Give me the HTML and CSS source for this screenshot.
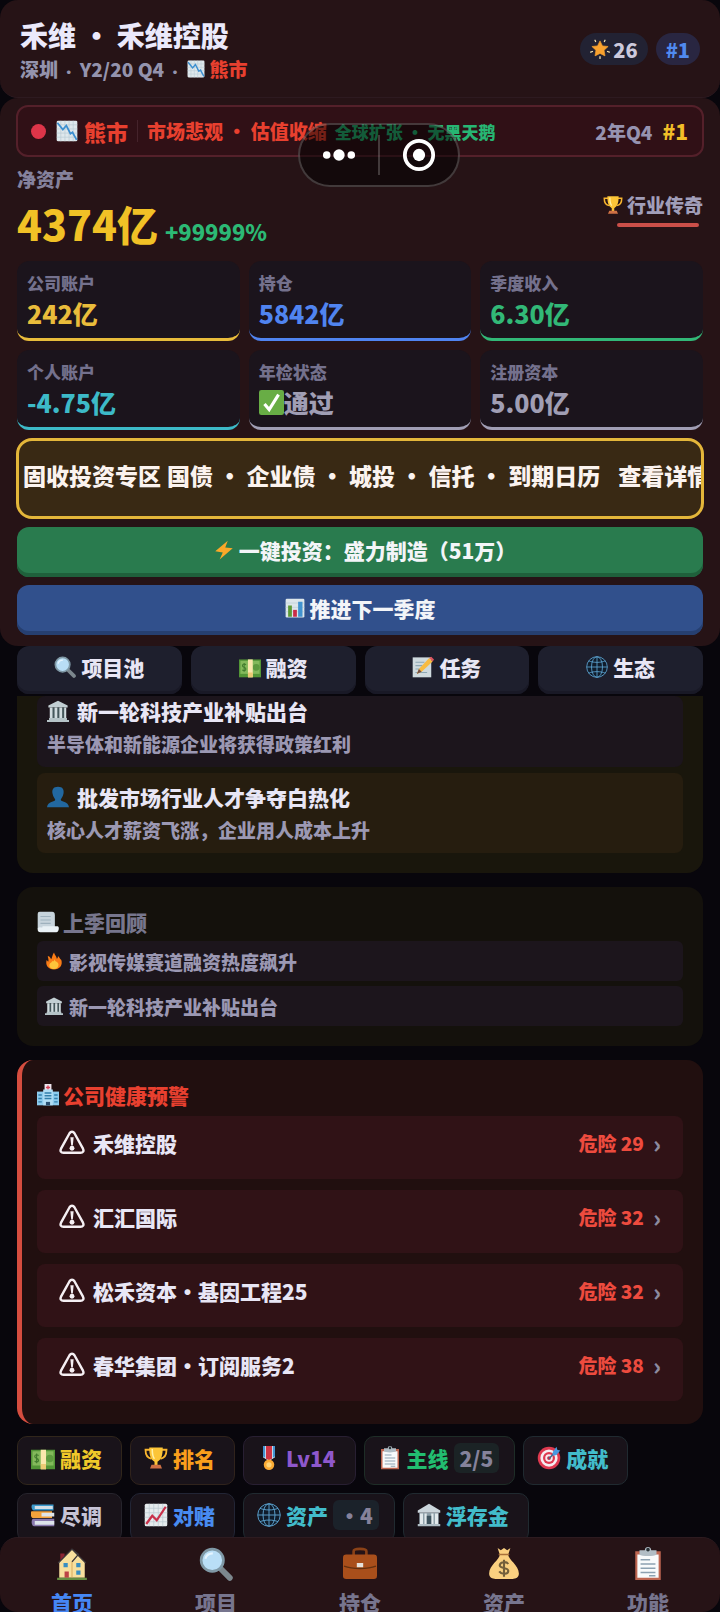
FILE: index.html
```html
<!DOCTYPE html>
<html lang="zh-CN">
<head>
<meta charset="utf-8">
<meta name="viewport" content="width=device-width, initial-scale=1">
<title>禾维控股</title>
<link rel="stylesheet" href="styles.css">
</head>
<body>
<svg class="sprite" aria-hidden="true">
  <symbol id="chart-down" viewBox="0 0 32 32"><rect x="1" y="1" width="30" height="30" rx="2" fill="#dfe8ec"/><path d="M7 1v30M13 1v30M19 1v30M25 1v30M1 7h30M1 13h30M1 19h30M1 25h30" stroke="#b9cbd4" stroke-width="1"/><path d="M2 4l8 10 5-6 6 12 3-2 6 11" fill="none" stroke="#3c8fd0" stroke-width="2.6"/></symbol>
  <symbol id="chart-up" viewBox="0 0 32 32"><rect x="1" y="1" width="30" height="30" rx="2" fill="#e6ecee"/><path d="M7 1v30M13 1v30M19 1v30M25 1v30M1 7h30M1 13h30M1 19h30M1 25h30" stroke="#bccad0" stroke-width="1"/><path d="M3 28l8-11 6 6 12-18" fill="none" stroke="#c9304a" stroke-width="3"/></symbol>
  <symbol id="bars" viewBox="0 0 32 32"><rect x="1" y="1" width="30" height="30" rx="2" fill="#dde6ea"/><path d="M1 8h30M1 15h30M1 22h30" stroke="#b9cbd4"/><path d="M5 12h6v18H5z" fill="#5c9a36"/><path d="M13 19h6v11h-6z" fill="#cb2c46"/><path d="M21 6h7v24h-7z" fill="#4293cf"/></symbol>
  <symbol id="star" viewBox="0 0 32 32"><path d="M16 3l4 8 9 1-6.500 6 1.500 9-8-4-8 4 1.500-9L3 12l9-1z" fill="#f9a22e" stroke="#f9a22e" stroke-linejoin="round"/><path d="M8 2l1 2M24 2l-1 2M1 21l3-1M31 21l-3-1M16 28v3" stroke="#fde9b0" stroke-width="2" stroke-linecap="round"/></symbol>
  <symbol id="trophy" viewBox="0 0 32 32"><path d="M8 5H2c0 7 2 11 8 12M24 5h6c0 7-2 11-8 12" fill="none" stroke="#f8b52e" stroke-width="2.400"/><path d="M7 2h18c0 11-2 16-7 19v5h-4v-5C9 18 7 13 7 2z" fill="#fcc537"/><path d="M11 4c0 7 1 11 3 13" fill="none" stroke="#fff0a6" stroke-width="2"/><path d="M10 25h12l2 5H8z" fill="#cf7145"/></symbol>
  <symbol id="check" viewBox="0 0 32 32"><rect width="32" height="32" rx="3" fill="#68ad45"/><path d="M7 18l6 7L25 6" fill="none" stroke="#fff" stroke-width="4"/></symbol>
  <symbol id="bolt" viewBox="0 0 32 32"><path d="M22 1L2 18l12 2-5 11 21-18-12-1z" fill="#fba829"/></symbol>
  <symbol id="magnifier" viewBox="0 0 32 32"><path d="M20 20l9 9" stroke="#7c878d" stroke-width="5.500" stroke-linecap="round"/><circle cx="12.500" cy="12.500" r="10.500" fill="#b9def6" stroke="#7f98a5" stroke-width="2.500"/><path d="M6 11c1-4 4-5 7-5" fill="none" stroke="#e6f5ff" stroke-width="2"/></symbol>
  <symbol id="cash" viewBox="0 0 32 32"><path d="M0 5h32v26H0z" fill="#529536"/><path d="M2 7h28v19H2z" fill="#83b95b"/><circle cx="25" cy="16.500" r="5" fill="#5d9a3f"/><path d="M10 13c-1-2-5-2-5 1s5 2 5 5-4 3-5 1M7.500 10v13" fill="none" stroke="#417b2d" stroke-width="1.500"/><path d="M13 5h7v26h-7z" fill="#f9e8ad"/><path d="M13 24h7v7h-7z" fill="#eccb75"/></symbol>
  <symbol id="memo" viewBox="0 0 32 32"><path d="M1 2h27v29H1z" fill="#cfdade"/><path d="M5 9h13M5 14h10M5 19h8M5 24h17" stroke="#8ca7b4" stroke-width="1.500"/><path d="M25 3l5 5-16 15-7 3 3-7z" fill="#f8bb41"/><path d="M25 3l3-2 4 4-2 3z" fill="#dc5560"/><path d="M10 19l4 4-7 3z" fill="#755047"/></symbol>
  <symbol id="globe" viewBox="0 0 32 32"><circle cx="16" cy="16" r="15" fill="#101c2b"/><g fill="none" stroke="#5a9ecb" stroke-width="1.300"><circle cx="16" cy="16" r="15"/><ellipse cx="16" cy="16" rx="8" ry="15"/><path d="M16 1v30M1 16h30M4 7c6 3 18 3 24 0M4 25c6-3 18-3 24 0"/></g></symbol>
  <symbol id="museum" viewBox="0 0 32 32"><path d="M16 1l14 7v3H2V8z" fill="#c2cfd3"/><path d="M5 11h22v16H5z" fill="#45575b"/><path d="M4 11h4v16H4zM11 11h4v16h-4zM18 11h4v16h-4zM25 11h3v16h-3z" fill="#d2dcdf"/><path d="M3 26h26v3H3zM0 29h32v3H0z" fill="#b5c3c7"/></symbol>
  <symbol id="person" viewBox="0 0 32 32"><path d="M16 1c7 0 9 4 8 10-1 5-3 7-4 9 0 3 11 2 12 11H0c1-9 12-8 12-11-1-2-3-4-4-9C7 5 9 1 16 1z" fill="#2268a0"/></symbol>
  <symbol id="scroll" viewBox="0 0 32 32"><path d="M4 1h18c3 0 4 2 4 5v20H1V5c0-3 1-4 3-4z" fill="#c7d4dc"/><path d="M5 8h15M5 13h15M5 18h15" stroke="#9eb1bd" stroke-width="1.500"/><path d="M8 22h22c3 0 2 9-2 9H5c-5 0-5-7-2-7 3-1 5 2 5-2z" fill="#e9f1f5"/></symbol>
  <symbol id="fire" viewBox="0 0 32 32"><path d="M16 1c1 5 5 7 5 11 2-1 2-3 2-5 3 2 3 5 6 7 3 9-3 17-13 17S0 23 3 14c1 1 2 3 3 3 1-5-1-6-1-10 4 1 5 4 6 6 2-3 2-8 5-12z" fill="#f97b16"/><path d="M18 11c-2 8 5 4 6 11 0 5-3 8-8 8s-9-3-8-8c1-3 4-3 5-6 2 2 4-1 5-5z" fill="#fdc43b"/></symbol>
  <symbol id="hospital" viewBox="0 0 32 32"><path d="M11 0h10v10H11z" fill="#eee5ed"/><path d="M16 2v6M13 5h6" stroke="#d64257" stroke-width="2"/><path d="M0 11h32v20H0z" fill="#8dcbed"/><path d="M9 8h14v23H9z" fill="#b1ddf4"/><path d="M11 13h10M11 17h10M11 21h10M2 16h5M2 21h5M2 26h5M25 16h5M25 21h5M25 26h5" stroke="#327faa" stroke-width="2"/><path d="M13 26h6v5h-6z" fill="#284e70"/></symbol>
  <symbol id="warning" viewBox="0 0 32 32"><path d="M13 4c1.500-2.500 4.500-2.500 6 0l10.500 19c1.500 3 0 5-3 5h-21c-3 0-4.500-2-3-5z" fill="none" stroke="#f5eff3" stroke-width="3"/><path d="M14 9h4l-1 10h-2z" fill="#f5eff3"/><circle cx="16" cy="22.500" r="3" fill="#f5eff3"/></symbol>
  <symbol id="medal" viewBox="0 0 32 32"><path d="M8 0h16v15l-8 5-8-5z" fill="#e5eff6"/><path d="M12 0h8v17l-4 2-4-2z" fill="#cf3444"/><path d="M8 0h3v16l-3-2zM21 0h3v14l-3 2z" fill="#4292d0"/><circle cx="16" cy="25" r="7" fill="#faab34"/><circle cx="16" cy="25" r="3.500" fill="#ffd477"/></symbol>
  <symbol id="clipboard" viewBox="0 0 32 32"><path d="M4 4h24v27H4z" fill="#bd6550"/><path d="M6 7h20v22H6z" fill="#f8fafb"/><path d="M9 12h9M9 16h14M9 20h14M9 24h14M17 27h6" stroke="#8ca1b1" stroke-width="1.300"/><path d="M8 3h5c0-4 6-4 6 0h5v4c-2 2-14 2-16 0z" fill="#b1bdc5"/><circle cx="16" cy="2.500" r="1.700" fill="#2a3438"/></symbol>
  <symbol id="target" viewBox="0 0 32 32"><circle cx="16" cy="16" r="15" fill="#df394f"/><circle cx="16" cy="16" r="11.500" fill="#f6edf0"/><circle cx="16" cy="16" r="8" fill="#df394f"/><circle cx="16" cy="16" r="5" fill="#f6edf0"/><circle cx="16" cy="16" r="2.500" fill="#c52e47"/><path d="M16 17l10-11" stroke="#43698c" stroke-width="2"/><path d="M21 8l5-7 1 4 4 1-5 6-5 1z" fill="#4a99df"/></symbol>
  <symbol id="books" viewBox="0 0 32 32"><path d="M2 2h28v8H4C0 10 0 2 2 2z" fill="#3c9acc"/><path d="M5 4h24v4H5z" fill="#d4dfe6"/><path d="M1 11h27v9H3c-4 0-4-9-2-9z" fill="#f3a23b"/><path d="M14 13h17v5H14z" fill="#dfe5e9"/><path d="M3 21h28v10H4c-4 0-4-10-1-10z" fill="#8878ad"/><path d="M5 24h26v5H5z" fill="#dce3ea"/></symbol>
  <symbol id="bank" viewBox="0 0 32 32"><path d="M16 1l15 9v3H1v-3z" fill="#ccd6dc"/><path d="M3 13h26v16H3z" fill="#90a1aa"/><path d="M4 14h4v14H4zM10 14h3v14h-3zM19 14h3v14h-3zM24 14h4v14h-4z" fill="#e2e9ec"/><path d="M13 17h6v12h-6z" fill="#3e535e"/><path d="M1 28h30v3H1z" fill="#aebcc4"/></symbol>
  <symbol id="house" viewBox="0 0 32 32"><path d="M5 6h4v7H5z" fill="#8b2433"/><path d="M4 14L16 2l12 12v15H4z" fill="#f8df9d"/><path d="M3 15L16 2l6 5-6 7M16 2l13 13" fill="none" stroke="#3c3639" stroke-width="1.300"/><path d="M8 15h4v4H8zM20 15h4v4h-4zM20 22h4v4h-4z" fill="#388ec2"/><path d="M9 23h4v6H9z" fill="#bc4446"/><path d="M16 14v15" stroke="#dcae61"/><path d="M2 29h28v2H2z" fill="#658e42"/></symbol>
  <symbol id="briefcase" viewBox="0 0 32 32"><path d="M10 8V4c0-3 12-3 12 0v4" fill="none" stroke="#8b4217" stroke-width="2.500"/><rect y="7" width="32" height="23" rx="3" fill="#a94f1b"/><path d="M1 18c8 3 22 3 30 0" fill="none" stroke="#63300f" stroke-width="1.500"/><path d="M13 15h6v4h-6z" fill="#e6e2db"/></symbol>
  <symbol id="moneybag" viewBox="0 0 32 32"><path d="M10 1l3 2 3-2 3 2 3-2-2 6c0 5 10 10 10 18 0 4-3 5-6 5H8c-3 0-6-1-6-5C2 17 12 12 12 7z" fill="#fad080"/><path d="M11 7h10" stroke="#a9713b" stroke-width="1.500"/><path d="M20 16c-2-3-8-2-8 1.500 0 3 8 1.500 8 5 0 3-6 4-8.500.5M16 12v16" fill="none" stroke="#735f3b" stroke-width="2"/></symbol>
</svg>

<div class="app">
  <header class="panel topbar">
    <div>
      <h1 class="title">禾维 • 禾维控股</h1>
      <p class="subtitle"><span>深圳 <span class="sep">·</span> Y2/20 Q4 <span class="sep">·</span></span><svg class="i18"><use href="#chart-down"/></svg><span class="red">熊市</span></p>
    </div>
    <div class="badges">
      <span class="badge badge-star"><svg class="i20"><use href="#star"/></svg>26</span>
      <span class="badge badge-rank">#1</span>
    </div>
  </header>

  <section class="panel overview">
    <div class="market">
      <span class="dot"></span>
      <svg class="i22"><use href="#chart-down"/></svg>
      <strong class="market-name">熊市</strong>
      <span class="market-desc">市场悲观 • 估值收缩</span>
      <span class="market-tip">全球扩张 • 无黑天鹅</span>
      <span class="market-date">2年Q4</span>
      <strong class="market-rank">#1</strong>
    </div>

    <div class="worth">
      <div>
        <p class="worth-label">净资产</p>
        <p class="worth-line"><strong class="worth-value">4374亿</strong><span class="worth-change">+99999%</span></p>
      </div>
      <div class="honor">
        <span class="honor-name"><svg class="i20"><use href="#trophy"/></svg>行业传奇</span>
        <span class="honor-bar"></span>
      </div>
    </div>

    <div class="stats">
      <div class="stat gold"><span class="stat-label">公司账户</span><strong class="stat-value">242亿</strong></div>
      <div class="stat blue"><span class="stat-label">持仓</span><strong class="stat-value">5842亿</strong></div>
      <div class="stat green"><span class="stat-label">季度收入</span><strong class="stat-value">6.30亿</strong></div>
      <div class="stat cyan"><span class="stat-label">个人账户</span><strong class="stat-value">-4.75亿</strong></div>
      <div class="stat gray"><span class="stat-label">年检状态</span><strong class="stat-value"><svg class="i25"><use href="#check"/></svg>通过</strong></div>
      <div class="stat gray"><span class="stat-label">注册资本</span><strong class="stat-value">5.00亿</strong></div>
    </div>

    <div class="actions">
      <button class="bond" type="button"><span>固收投资专区</span><span>国债 • 企业债 • 城投 • 信托 • 到期日历</span><span class="bond-more">查看详情</span></button>
      <button class="action action-green" type="button"><svg class="i20"><use href="#bolt"/></svg>一键投资：盛力制造（51万）</button>
      <button class="action action-blue" type="button"><svg class="i20"><use href="#bars"/></svg>推进下一季度</button>
    </div>
  </section>

  <div class="tabs">
    <button class="tab" type="button"><svg class="i22"><use href="#magnifier"/></svg>项目池</button>
    <button class="tab" type="button"><svg class="i22"><use href="#cash"/></svg>融资</button>
    <button class="tab" type="button"><svg class="i22"><use href="#memo"/></svg>任务</button>
    <button class="tab" type="button"><svg class="i22"><use href="#globe"/></svg>生态</button>
  </div>

  <main class="feed">
    <section class="card news">
      <article class="news-item">
        <h3 class="news-title"><svg class="i22"><use href="#museum"/></svg>新一轮科技产业补贴出台</h3>
        <p class="news-text">半导体和新能源企业将获得政策红利</p>
      </article>
      <article class="news-item news-hot">
        <h3 class="news-title"><svg class="i22"><use href="#person"/></svg>批发市场行业人才争夺白热化</h3>
        <p class="news-text">核心人才薪资飞涨，企业用人成本上升</p>
      </article>
    </section>

    <section class="card recap">
      <h2 class="card-title"><svg class="i22"><use href="#scroll"/></svg>上季回顾</h2>
      <p class="recap-item"><svg class="i18"><use href="#fire"/></svg>影视传媒赛道融资热度飙升</p>
      <p class="recap-item"><svg class="i18"><use href="#museum"/></svg>新一轮科技产业补贴出台</p>
    </section>

    <section class="card health">
      <h2 class="card-title red"><svg class="i22"><use href="#hospital"/></svg>公司健康预警</h2>
      <div class="alerts">
        <button class="alert" type="button"><svg class="i26"><use href="#warning"/></svg><span class="alert-name">禾维控股</span><span class="alert-level">危险 29</span><span class="arrow">›</span></button>
        <button class="alert" type="button"><svg class="i26"><use href="#warning"/></svg><span class="alert-name">汇汇国际</span><span class="alert-level">危险 32</span><span class="arrow">›</span></button>
        <button class="alert" type="button"><svg class="i26"><use href="#warning"/></svg><span class="alert-name">松禾资本・基因工程25</span><span class="alert-level">危险 32</span><span class="arrow">›</span></button>
        <button class="alert" type="button"><svg class="i26"><use href="#warning"/></svg><span class="alert-name">春华集团・订阅服务2</span><span class="alert-level">危险 38</span><span class="arrow">›</span></button>
      </div>
    </section>

    <div class="chips">
      <button class="chip chip-gold" type="button"><svg class="i24"><use href="#cash"/></svg>融资</button>
      <button class="chip chip-orange" type="button"><svg class="i24"><use href="#trophy"/></svg>排名</button>
      <button class="chip chip-purple" type="button"><svg class="i24"><use href="#medal"/></svg>Lv14</button>
      <button class="chip chip-green" type="button"><svg class="i24"><use href="#clipboard"/></svg>主线<span class="count">2/5</span></button>
      <button class="chip chip-cyan" type="button"><svg class="i24"><use href="#target"/></svg>成就</button>
      <button class="chip" type="button"><svg class="i24"><use href="#books"/></svg>尽调</button>
      <button class="chip chip-blue" type="button"><svg class="i24"><use href="#chart-up"/></svg>对赌</button>
      <button class="chip chip-cyan" type="button"><svg class="i24"><use href="#globe"/></svg>资产<span class="count count-blue">・4</span></button>
      <button class="chip chip-cyan" type="button"><svg class="i24"><use href="#bank"/></svg>浮存金</button>
    </div>
  </main>

  <nav class="panel nav">
    <a class="nav-link active" href="#"><svg class="i34"><use href="#house"/></svg>首页</a>
    <a class="nav-link" href="#"><svg class="i34"><use href="#magnifier"/></svg>项目</a>
    <a class="nav-link" href="#"><svg class="i34"><use href="#briefcase"/></svg>持仓</a>
    <a class="nav-link" href="#"><svg class="i34"><use href="#moneybag"/></svg>资产</a>
    <a class="nav-link" href="#"><svg class="i34"><use href="#clipboard"/></svg>功能</a>
  </nav>

  <div class="capsule">
    <button class="capsule-button" type="button" aria-label="更多"><svg class="capsule-icon" viewBox="0 0 36 36"><g fill="#fff"><circle cx="5" cy="18" r="4"/><circle cx="18" cy="18" r="6"/><circle cx="31" cy="18" r="4"/></g></svg></button>
    <button class="capsule-button" type="button" aria-label="关闭"><svg class="capsule-icon" viewBox="0 0 36 36"><circle cx="18" cy="18" r="15" fill="none" stroke="#fff" stroke-width="4"/><circle cx="18" cy="18" r="6.500" fill="#fff"/></svg></button>
  </div>
</div>
</body>
</html>
```

FILE: styles.css
```css
* { box-sizing: border-box; }

body {
  margin: 0;
  background: #08060c;
  color: #e8e6f5;
  font-family: "Noto Sans CJK SC", "Noto Sans", sans-serif;
  font-size: 19px;
  font-weight: 900;
}

h1, h2, h3, p, strong { margin: 0; font-weight: 900; }

button {
  margin: 0;
  border: 0;
  padding: 0;
  background: none;
  color: inherit;
  font: inherit;
  cursor: pointer;
}

.sprite { display: none; }
svg { flex: none; }
.i18 { width: 18px; height: 18px; }
.i20 { width: 20px; height: 20px; }
.i22 { width: 22px; height: 22px; }
.i24 { width: 24px; height: 24px; }
.i25 { width: 25px; height: 25px; }
.i26 { width: 26px; height: 26px; }
.i34 { width: 34px; height: 34px; }
.red { color: #e8402f; }

.app {
  position: relative;
  display: flex;
  flex-direction: column;
  height: 100vh;
  overflow: hidden;
}

.panel { background: #261316; border-radius: 18px; }

/* Header */
.topbar {
  display: flex;
  justify-content: space-between;
  align-items: center;
  padding: 15px 20px 14px;
  border-bottom: 1px solid #2d1a20;
}
.title { font-size: 28px; line-height: 40px; color: #ebe9fb; }
.subtitle {
  display: flex;
  align-items: center;
  gap: 5px;
  line-height: 28px;
  color: #9493ad;
}
.sep { font-size: 13px; line-height: 1; }
.badges { display: flex; gap: 8px; }
.badge {
  display: flex;
  align-items: center;
  gap: 3px;
  height: 32px;
  padding: 0 10px;
  border-radius: 16px;
  font-size: 20px;
}
.badge-star { background: #222233; color: #ccc9dc; }
.badge-rank { background: #292641; color: #508af0; }

/* Overview */
.overview { padding: 7px 16px 11px; }
.market {
  display: flex;
  align-items: center;
  height: 52px;
  padding: 0 14px 0 13px;
  border: 2px solid #54202a;
  border-radius: 12px;
  background: #301016;
  white-space: nowrap;
}
.dot {
  width: 15px;
  height: 15px;
  margin-right: 10px;
  border-radius: 50%;
  background: #dd3549;
}
.market-name { margin-left: 6px; font-size: 22px; color: #e8402f; }
.market-desc {
  margin-left: 9px;
  padding-left: 9px;
  border-left: 1px solid #45232b;
  line-height: 22px;
  color: #e8402f;
}
.market-tip { margin-left: 8px; font-size: 17px; color: #27b673; }
.market-date { margin-left: auto; color: #9693b0; }
.market-rank { margin-left: 10px; font-size: 21px; color: #f2be28; }

.worth {
  display: flex;
  justify-content: space-between;
  padding: 8px 1px 0;
}
.worth-label { line-height: 28px; color: #85829d; }
.worth-line { display: flex; align-items: baseline; gap: 7px; line-height: 60px; }
.worth-value { font-size: 41px; color: #f1c126; }
.worth-change { font-size: 22px; color: #2cb975; }
.honor { display: flex; flex-direction: column; align-items: flex-end; gap: 4px; padding-top: 26px; }
.honor-name { display: flex; align-items: center; gap: 4px; line-height: 28px; color: #a19eb9; }
.honor-bar { width: 82px; height: 4px; margin-right: 4px; border-radius: 2px; background: #cb4f49; }

.stats {
  display: grid;
  grid-template-columns: repeat(3, 1fr);
  gap: 9px;
  margin: 0 1px;
}
.stat {
  display: flex;
  flex-direction: column;
  height: 80px;
  padding: 9px 10px 0;
  border-bottom: 3px solid currentColor;
  border-radius: 12px;
  background: #1b141c;
}
.stat-label { font-size: 17px; line-height: 26px; color: #74718d; }
.stat-value { display: flex; align-items: center; font-size: 25px; line-height: 34px; }
.gold { color: #e9bc3b; }
.blue { color: #5084f0; }
.green { color: #32b877; }
.cyan { color: #3dbac8; }
.gray { color: #a09eb4; }

.actions { display: flex; flex-direction: column; gap: 8px; margin-top: 8px; }
.bond {
  display: flex;
  gap: 6px;
  height: 81px;
  padding: 18px 0 0 4px;
  border: 3px solid #e4b63a;
  border-radius: 16px;
  background: #392914;
  color: #fbf3ef;
  font-size: 23px;
  line-height: 32px;
  white-space: nowrap;
  overflow: hidden;
}
.bond-more { margin-left: 12px; }
.action {
  display: flex;
  justify-content: center;
  align-items: center;
  gap: 5px;
  height: 50px;
  margin: 0 1px;
  padding-bottom: 5px;
  border-radius: 12px;
  color: #f3f5f8;
  font-size: 21px;
}
.action-green { padding-left: 10px; background: #297b4e; box-shadow: inset 0 -4px #1f603b; }
.action-blue { background: #31508c; box-shadow: inset 0 -4px #263f70; }

/* Tabs */
.tabs {
  display: grid;
  grid-template-columns: repeat(4, 1fr);
  gap: 9px;
  padding: 0 17px 2px;
}
.tab {
  display: flex;
  justify-content: center;
  align-items: center;
  gap: 5px;
  height: 48px;
  padding-bottom: 6px;
  border-radius: 12px;
  background: #1e1f2d;
  box-shadow: inset 0 -3px #191926;
  font-size: 21px;
}

/* Feed */
.feed { flex: 1; min-height: 0; padding: 0 17px; overflow: hidden; }
.card { padding: 20px; border-radius: 16px; background: #14110c; }
.news { padding-top: 0; border-radius: 0 0 16px 16px; background: #19160c; }
.news-item { padding: 0 10px 7px; border-radius: 8px; background: #1c151c; }
.news-hot { margin-top: 6px; padding-top: 9px; background: #261d0f; }
.news-title {
  display: flex;
  align-items: center;
  gap: 8px;
  margin-bottom: 2px;
  font-size: 21px;
  line-height: 30px;
}
.news-text { line-height: 32px; color: #9b98b3; }

.recap { margin-top: 14px; }
.card-title {
  display: flex;
  align-items: center;
  gap: 4px;
  font-size: 21px;
  line-height: 30px;
}
.recap .card-title { color: #77768d; margin-bottom: 4px; }
.recap-item {
  display: flex;
  align-items: center;
  gap: 6px;
  height: 40px;
  padding: 0 8px;
  border-radius: 6px;
  background: #1c151c;
  color: #9b98b3;
}
.recap-item + .recap-item { margin-top: 5px; }

.health {
  margin-top: 14px;
  padding: 20px 20px 23px 15px;
  border-left: 5px solid #d54d3f;
  background: #210f0f;
}
.alerts { display: flex; flex-direction: column; gap: 11px; margin-top: 6px; }
.alert {
  display: flex;
  align-items: center;
  height: 63px;
  padding: 0 22px 10px 22px;
  border-radius: 8px;
  background: #301216;
}
.alert-name { margin-left: 8px; font-size: 21px; }
.alert-level { margin-left: auto; color: #ed4b3e; }
.arrow { margin-left: 9px; font-size: 24px; line-height: 28px; color: #8c8a9f; }

.chips { display: flex; flex-wrap: wrap; gap: 8px; margin-top: 12px; }
.chip {
  display: flex;
  align-items: center;
  gap: 5px;
  height: 49px;
  padding: 0 19px 5px 13px;
  border: 1px solid #26242c;
  border-radius: 10px;
  background: #19131a;
  color: #c6c3d6;
  font-size: 21px;
}
.chip-gold { border-color: #30261b; color: #efc82a; }
.chip-orange { border-color: #30231c; color: #fa9f1c; }
.chip-purple { border-color: #281f32; color: #8e58cc; }
.chip-green { border-color: #1e2d27; color: #22bd70; }
.chip-cyan { border-color: #202a30; color: #42bccb; }
.chip-blue { border-color: #222535; color: #488bf0; }
.chip:has(.count) { padding-right: 15px; }
.count {
  padding: 0 6px;
  border-radius: 6px;
  background: #1b2325;
  color: #85829b;
  line-height: 30px;
}
.count-blue { background: #1b222a; }

/* Bottom navigation */
.nav {
  display: grid;
  grid-template-columns: repeat(5, 1fr);
  height: 75px;
  overflow: hidden;
  border-top: 1px solid #2d1b20;
}
.nav-link {
  display: flex;
  flex-direction: column;
  align-items: center;
  gap: 6px;
  padding-top: 9px;
  color: #77758e;
  font-size: 21px;
  line-height: 30px;
  text-decoration: none;
}
.active { color: #4687f5; }

/* Floating window control */
.capsule {
  position: absolute;
  top: 123px;
  left: 298px;
  display: flex;
  align-items: center;
  width: 162px;
  height: 64px;
  border: 2px solid #ffffff33;
  border-radius: 32px;
  background: #00000080;
}
.capsule-button {
  display: flex;
  flex: 1;
  justify-content: center;
  align-items: center;
  height: 40px;
}
.capsule-button + .capsule-button { border-left: 2px solid #ffffff33; }
.capsule-icon { width: 34px; height: 34px; }
```
